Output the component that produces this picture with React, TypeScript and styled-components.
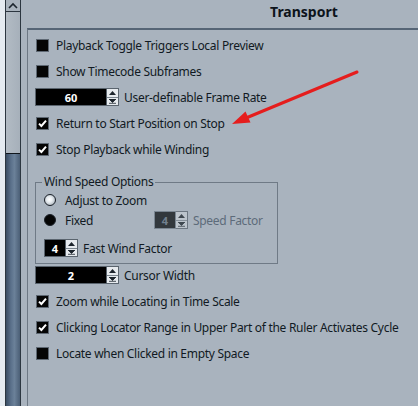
import React from 'react';
import styled, { createGlobalStyle } from 'styled-components';

const GlobalStyle = createGlobalStyle`
  html, body {
    margin: 0;
    padding: 0;
    background: #a9b3be;
  }
  body {
    font-family: "Noto Sans", "Open Sans", sans-serif;
    font-size: 12px;
    letter-spacing: -0.3px;
    color: #111a23;
  }
`

const Frame = styled.div`
  position: relative;
  display: flex;
  width: 418px;
  height: 406px;
  overflow: hidden;
  background: #a9b3be;
`

const LeftEdge = styled.div`
  width: 5px;
  background: #e5ebf1;
`

const ScrollBar = styled.div`
  display: flex;
  flex-direction: column;
  width: 14px;
  border-left: 1px solid #2c3640;
  border-right: 1px solid #2c3640;
  background: #a5afb9;
`

const ArrowBtn = styled.div`
  display: flex;
  align-items: center;
  justify-content: center;
  height: 11px;
  border-bottom: 1px solid #2c3640;
  background: #a9b3bd;
`

const Track = styled.div`
  flex: 1;
  display: flex;
  flex-direction: column;
  background: linear-gradient(to right, #b2bbc4, #a6b0ba);
`

const Thumb = styled.div`
  margin-top: 141px;
  flex: 1;
  border-top: 1px solid #10161c;
  background: linear-gradient(to right, #3a4d63, #5a708a 35%, #6b8199 60%, #4b5f76);
`

const Main = styled.div`
  flex: 1;
  display: flex;
  flex-direction: column;
  padding-left: 6px;
`

const Header = styled.div`
  height: 28px;
  padding-left: 243px;
  font-size: 14px;
  font-weight: 700;
  letter-spacing: 0;
  line-height: 24px;
  color: #0d141b;
`

const Content = styled.div`
  flex: 1;
  border-top: 2px solid #566576;
  border-left: 1px solid #6d7884;
  padding: 2px 0 0 7px;
`

const Row = styled.div`
  display: flex;
  align-items: center;
  height: 26px;
  white-space: nowrap;
`

const Box = styled.div`
  display: flex;
  align-items: center;
  justify-content: center;
  width: 11px;
  height: 11px;
  margin: 0 7px 0 1px;
  background: #050505;
  border: 1px solid #5e6873;
`

const Label = styled.span<{ $dim?: boolean; $w?: number }>`
  color: ${p => (p.$dim ? '#5d6b7a' : '#111a23')};
  ${p => (p.$w ? `width: ${p.$w}px;` : '')}
`

const SpinWrap = styled.div<{ $dim?: boolean }>`
  display: flex;
  height: 18px;
  margin-right: 5px;
  opacity: ${p => (p.$dim ? 0.75 : 1)};
`

const SpinValue = styled.div<{ $w: number; $dim?: boolean }>`
  display: flex;
  align-items: center;
  justify-content: center;
  width: ${p => p.$w}px;
  box-sizing: border-box;
  background: ${p => (p.$dim ? '#0b0f13' : '#000')};
  border: 1px solid ${p => (p.$dim ? '#6b7784' : '#5a646e')};
  color: ${p => (p.$dim ? '#5f7080' : '#fff')};
  font-size: 11px;
  font-weight: 700;
  letter-spacing: 0;
`

const SpinArrows = styled.div<{ $dim?: boolean }>`
  display: flex;
  flex-direction: column;
  width: 12px;
  box-sizing: border-box;
  border: 1px solid #5a646e;
  border-left: none;
  background: ${p => (p.$dim ? '#c3cad1' : '#e6eaee')};
`

const SpinHalf = styled.div<{ $down?: boolean }>`
  flex: 1;
  display: flex;
  align-items: center;
  justify-content: center;
  ${p => (p.$down ? 'border-top: 1px solid #7b858f;' : '')}
`

const Group = styled.fieldset`
  width: 243px;
  box-sizing: border-box;
  margin: 12px 0 0 0;
  padding: 0 0 5px 8px;
  border: 1px solid #6f7a86;
  min-width: 0;
`

const Legend = styled.legend`
  padding: 0 2px;
  margin-left: -2px;
  line-height: 16px;
`

const GroupRow = styled.div<{ $gap?: number }>`
  display: flex;
  align-items: center;
  height: 20px;
  margin-top: ${p => p.$gap ?? 0}px;
  white-space: nowrap;
`

const Radio = styled.div<{ $on?: boolean }>`
  width: 10px;
  height: 10px;
  margin-right: 9px;
  border-radius: 50%;
  border: 1px solid #1a2028;
  background: ${p =>
    p.$on
      ? 'radial-gradient(circle at 45% 45%, #ffffff 0%, #e8edf1 35%, #8f99a3 100%)'
      : '#040404'};
`

const CursorRow = styled(Row)`
  margin-top: -2px;
`

const Overlay = styled.svg`
  position: absolute;
  left: 0;
  top: 0;
  pointer-events: none;
`

const Check = ({ on }: { on?: boolean }) => (
  <Box>
    {on && (
      <svg width="9" height="9" viewBox="0 0 9 9">
        <path d="M1 4.6 L3.4 7 L8 1.6" stroke="#fff" strokeWidth="2" fill="none" />
      </svg>
    )}
  </Box>
)

const Spinner = ({ value, w, dim }: { value: string; w: number; dim?: boolean }) => (
  <SpinWrap $dim={dim}>
    <SpinValue $w={w} $dim={dim}>{value}</SpinValue>
    <SpinArrows $dim={dim}>
      <SpinHalf>
        <svg width="7" height="4" viewBox="0 0 7 4"><path d="M0 4 L3.5 0 L7 4 Z" fill="#1b232b" /></svg>
      </SpinHalf>
      <SpinHalf $down>
        <svg width="7" height="5" viewBox="0 0 7 5"><path d="M0 0 L3.5 3.5 L7 0 Z M0 4.3 H7" fill="#1b232b" stroke="#1b232b" strokeWidth="0.8" /></svg>
      </SpinHalf>
    </SpinArrows>
  </SpinWrap>
)

const CheckRow = ({ on, text }: { on?: boolean; text: string }) => (
  <Row>
    <Check on={on} />
    <Label>{text}</Label>
  </Row>
)

const App = () => {
  return (
    <>
      <GlobalStyle />
      <Frame>
        <LeftEdge />
        <ScrollBar>
          <ArrowBtn>
            <svg width="10" height="7" viewBox="0 0 10 7">
              <path d="M1 6 L5 2 L9 6" stroke="#1c252e" strokeWidth="1.6" fill="none" />
            </svg>
          </ArrowBtn>
          <Track>
            <Thumb />
          </Track>
        </ScrollBar>
        <Main>
          <Header>Transport</Header>
          <Content>
            <CheckRow text="Playback Toggle Triggers Local Preview" />
            <CheckRow text="Show Timecode Subframes" />
            <Row>
              <Spinner value="60" w={72} />
              <Label>User-definable Frame Rate</Label>
            </Row>
            <CheckRow on text="Return to Start Position on Stop" />
            <CheckRow on text="Stop Playback while Winding" />

            <Group>
              <Legend>Wind Speed Options</Legend>
              <GroupRow>
                <Radio $on />
                <Label>Adjust to Zoom</Label>
              </GroupRow>
              <GroupRow>
                <Radio />
                <Label $w={89}>Fixed</Label>
                <Spinner value="4" w={22} dim />
                <Label $dim>Speed Factor</Label>
              </GroupRow>
              <GroupRow $gap={8}>
                <Spinner value="4" w={22} />
                <Label>Fast Wind Factor</Label>
              </GroupRow>
            </Group>

            <CursorRow>
              <Spinner value="2" w={72} />
              <Label>Cursor Width</Label>
            </CursorRow>
            <CheckRow on text="Zoom while Locating in Time Scale" />
            <CheckRow on text="Clicking Locator Range in Upper Part of the Ruler Activates Cycle" />
            <CheckRow text="Locate when Clicked in Empty Space" />
          </Content>
        </Main>
        <Overlay width="418" height="406" viewBox="0 0 418 406">
          <line x1="357" y1="72" x2="246" y2="118" stroke="#e51d1d" strokeWidth="3" strokeLinecap="round" />
          <path d="M232 124 L245.5 111.5 L250.5 122.5 Z" fill="#e51d1d" />
        </Overlay>
      </Frame>
    </>
  );
};

export default App;
